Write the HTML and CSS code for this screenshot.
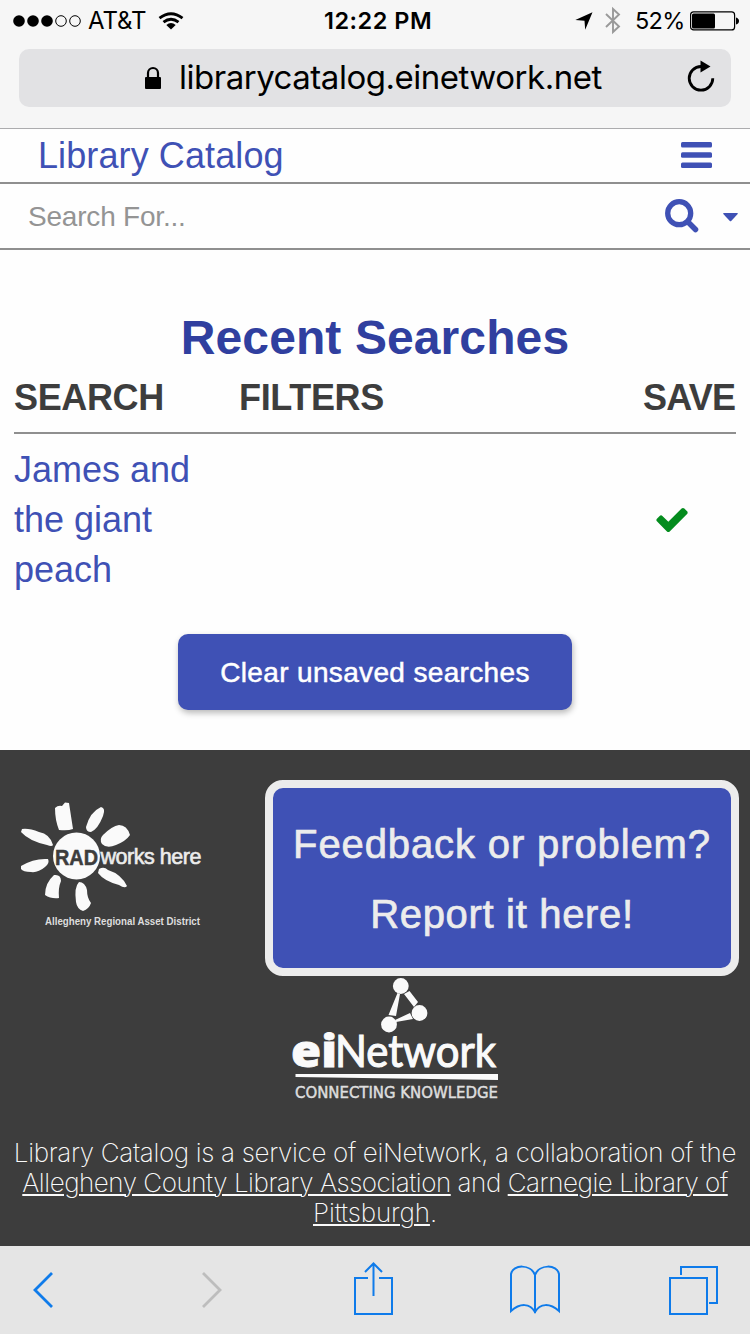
FILE: index.html
```html
<!DOCTYPE html>
<html lang="en">
<head>
<meta charset="utf-8">
<title>Library Catalog</title>
<link rel="stylesheet" href="styles.css">
</head>
<body>
<header class="browser-bar">
  <div class="status">
    <svg class="signal" width="69" height="14" viewBox="0 0 69 14"><g fill="#000"><circle cx="6" cy="7" r="5.8"/><circle cx="20" cy="7" r="5.8"/><circle cx="34" cy="7" r="5.8"/></g><g fill="none" stroke="#000"><circle cx="48" cy="7" r="5.3"/><circle cx="62" cy="7" r="5.3"/></g></svg>
    <span class="carrier">AT&amp;T</span>
    <svg class="wifi" width="26" height="18" viewBox="0 0 26 18"><g fill="none" stroke="#000" stroke-width="2.9"><path d="M1.5 6.2Q13 -2.6 24.500 6.2"/><path d="M5.500 10.200Q13 4.200 20.500 10.200"/></g><path d="M8.300 13Q13 9.200 17.700 13L13 17.500Z"/></svg>
    <span class="clock">12:22 PM</span>
    <svg class="locate" width="18" height="18" viewBox="0 0 18 18"><path d="M17.500 .3 10.200 17.700 9.500 8.800.3 8Z"/></svg>
    <svg class="bluetooth" width="16" height="27" viewBox="0 0 16 27"><path d="M1 7 14 19.500 8 25V2L14 7.500 1 20" fill="none" stroke="#999" stroke-width="1.9"/></svg>
    <span class="percent">52%</span>
    <svg class="battery" width="49" height="20" viewBox="0 0 49 20"><rect x=".6" y=".9" width="44" height="18" rx="3" fill="none" stroke="#000" stroke-width="1.2"/><rect x="2" y="2.500" width="23" height="15" rx="1.500"/><path d="M46 6.500Q49 7.500 49 10T46 13.500Z"/></svg>
  </div>
  <div class="address">
    <svg class="lock" width="18" height="24" viewBox="0 0 18 24"><path d="M4 12V7a5 5 0 0 1 10 0v5" fill="none" stroke="#000" stroke-width="2.200"/><rect x="1" y="11" width="16" height="12" rx="1"/></svg>
    <span class="host">librarycatalog.einetwork.net</span>
    <svg class="reload" width="28" height="32" viewBox="0 0 28 32"><path d="M14 6.500A11.800 11.800 0 1 0 25.800 18.300" fill="none" stroke="#000" stroke-width="2.800"/><path d="M13.500 .5 23.500 6.500 13.500 12.500Z"/></svg>
  </div>
</header>

<nav class="site-bar">
  <a class="brand">Library Catalog</a>
  <svg class="menu" width="31" height="26" viewBox="0 0 31 26" fill="#3f51b5"><rect width="31" height="5.400" rx="1.500"/><rect y="10.300" width="31" height="5.400" rx="1.500"/><rect y="20.600" width="31" height="5.400" rx="1.500"/></svg>
</nav>
<div class="search-bar">
  <span class="placeholder">Search For...</span>
  <svg class="magnifier" width="34" height="34" viewBox="0 0 34 34" fill="none" stroke="#3f51b5"><circle cx="14.200" cy="14.200" r="11.500" stroke-width="5.300"/><path d="M23 23 30.500 30.500" stroke-width="5.500" stroke-linecap="round"/></svg>
  <svg class="caret" width="15" height="9" viewBox="0 0 15 9" fill="#3f51b5"><path d="M.7 0H14.300Q15.200.3 14.700 1L8.200 8Q7.500 8.700 6.800 8L.3 1Q-.2.3.7 0Z"/></svg>
</div>

<main class="content">
  <h1>Recent Searches</h1>
  <div class="grid head"><span class="c-search">SEARCH</span><span class="c-filters">FILTERS</span><span class="c-save">SAVE</span></div>
  <div class="grid row">
    <a class="query">James and the giant peach</a>
    <span></span>
    <svg class="check" width="32" height="24" viewBox="121 334 1550 1188"><path fill="#048c1e" d="M1671 566q0 40-28 68l-724 724-136 136q-28 28-68 28t-68-28l-136-136-362-362q-28-28-28-68t28-68l136-136q28-28 68-28t68 28l294 295 656-657q28-28 68-28t68 28l136 136q28 28 28 68z"/></svg>
  </div>
  <button class="clear">Clear unsaved searches</button>
</main>

<footer class="footer">
  <div class="partners">
    <svg class="rad" width="210" height="140" viewBox="18 800 210 140" fill="#fafafa">
      <path d="M55 808Q58 805 62 806L65 802.500 69 803 73 829Q68 831 59 830Q55 820 55 808Z"/>
      <path d="M101 807Q106 808 103 816Q98 829 91 832Q86 832 86 827Q90 812 101 807Z"/>
      <path d="M119 825Q127 825 130 835Q126 841 116 845Q107 849 102 844Q99 839 103 835Q112 826 119 825Z"/>
      <path d="M22 829Q29 828 39 832Q50 834 53 845Q52 847 47 845Q29 841 21 832Z"/>
      <path d="M21 866Q34 858 48 859Q50 863 45 867Q38 873 31 872Q23 872 21 869Z"/>
      <path d="M54 875Q61 874 61 881Q58 888 59 898Q51 899 45 895Q45 883 54 875Z"/>
      <path d="M79 882Q85 882 87 890Q87 898 91 903Q89 909 83 911Q77 909 76 902Q74 887 79 882Z"/>
      <path d="M99 869Q104 866 108 870Q121 874 127 886Q125 889 119 885Q104 881 98 873Z"/>
      <ellipse cx="76.500" cy="856" rx="23.500" ry="23.500"/>
      <text class="rad-name" x="55" y="864.500" textLength="43" lengthAdjust="spacingAndGlyphs">RAD</text>
      <text class="rad-words" x="100.500" y="864" textLength="101" lengthAdjust="spacing">works here</text>
      <text class="rad-sub" x="45" y="925" textLength="155" lengthAdjust="spacingAndGlyphs">Allegheny Regional Asset District</text>
    </svg>
    <a class="feedback">Feedback or problem?<span>Report it here!</span></a>
  </div>
  <svg class="ein" width="230" height="134" viewBox="280 977 230 134" fill="#fafafa">
    <circle cx="400.800" cy="986" r="7.900"/><circle cx="419.500" cy="1013" r="7.900"/><circle cx="389" cy="1024.500" r="7.900"/>
    <path d="M397.500 993 388.500 1015 396 1016 400 994ZM404 994 414 1007 418 1002 409.500 991ZM396 1022 413 1019 410 1013 395 1020Z"/>
    <text class="ein-bold" x="291" y="1067" textLength="46" lengthAdjust="spacingAndGlyphs">ei</text>
    <text class="ein-name" x="335" y="1067" textLength="161" lengthAdjust="spacingAndGlyphs">Network</text>
    <path d="M295.500 1074H498V1080L295.500 1077Z"/>
    <text class="ein-sub" x="295" y="1098" textLength="203" lengthAdjust="spacingAndGlyphs">CONNECTING KNOWLEDGE</text>
  </svg>
  <p class="credit"><span class="l1">Library Catalog is a service of eiNetwork, a collaboration of the</span><span class="l2"><a>Allegheny County Library Association</a> and <a>Carnegie Library of</a></span><span class="l3"><a>Pittsburgh</a>.</span></p>
</footer>

<nav class="toolbar">
  <svg width="22" height="38" viewBox="0 0 22 38"><path d="M20 2 3 19 20 36" fill="none" stroke="#0f7bea" stroke-width="2.800"/></svg>
  <svg width="22" height="38" viewBox="0 0 22 38"><path d="M2 2 19 19 2 36" fill="none" stroke="#bdbdbd" stroke-width="2.800"/></svg>
  <svg class="share" width="40" height="54" viewBox="0 0 40 54"><path d="M14 16H1V52H38V16H25M19.500 34V2M11 10 19.500 1.500 28 10" fill="none" stroke="#0f7bea" stroke-width="2"/></svg>
  <svg width="52" height="50" viewBox="0 0 52 50"><path d="M26 10C22-1 4-1 2 9V46C11 38 21 38 26 47C31 38 41 38 50 46V9C48-1 30-1 26 10V48" fill="none" stroke="#0f7bea" stroke-width="2"/></svg>
  <svg width="50" height="50" viewBox="0 0 50 50"><path d="M1 13H38V49H1ZM12 10V2H48V38H40" fill="none" stroke="#0f7bea" stroke-width="2"/></svg>
</nav>
</body>
</html>
```

FILE: styles.css
```css
* { box-sizing: border-box; }
body { margin: 0; width: 750px; height: 1334px; overflow: hidden; display: flex; flex-direction: column; background: #fefefe; font-family: "Liberation Sans", Arial, sans-serif; color: #3d3d3d; }
svg { display: block; flex: none; overflow: visible; }
h1, p { margin: 0; }

.browser-bar { height: 129px; flex: none; background: #f6f6f6; border-bottom: 1px solid #acacae; font-family: Inter, sans-serif; color: #000; }
.status { height: 41px; display: flex; align-items: center; padding-left: 13px; font-size: 24px; white-space: nowrap; }
.carrier { width: 58px; margin-left: 6px; letter-spacing: -.1px; }
.wifi { margin-left: 12px; }
.clock { width: 112px; margin-left: 140px; font-size: 23.5px; font-weight: 600; letter-spacing: .5px; }
.locate { margin-left: 139px; }
.bluetooth { margin-left: 12px; }
.percent { width: 48px; margin-left: 14px; font-size: 23.5px; letter-spacing: -.7px; }
.battery { margin-left: 7px; }
.address { height: 58px; margin: 8px 19px 0; padding: 0 16px 0 125px; display: flex; align-items: center; border-radius: 10px; background: #e2e2e4; }
.host { margin-left: 17px; font-size: 33px; line-height: 40px; margin-top: -2px; letter-spacing: -.48px; }
.reload { margin-left: auto; margin-top: -4px; }

.site-bar { height: 55px; flex: none; display: flex; align-items: center; justify-content: space-between; padding: 0 38px; border-bottom: 2px solid #8f8f8f; }
.brand { color: #3f51b5; font-size: 36px; letter-spacing: .1px; }
.menu { margin-top: -2px; }
.search-bar { height: 66px; flex: none; display: flex; align-items: center; padding: 0 12px 0 28px; border-bottom: 2px solid #8f8f8f; }
.placeholder { margin-top: 2px; font-size: 28px; letter-spacing: -.2px; color: #949494; }
.magnifier { margin-left: auto; }
.caret { margin-left: 24px; margin-top: 3px; }

.content { height: 500px; flex: none; padding: 60px 14px 0; display: flex; flex-direction: column; }
h1 { text-align: center; color: #303f9f; font-size: 48px; line-height: 56px; letter-spacing: .1px; }
.grid { display: grid; grid-template-columns: 225px 1fr 93px; }
.head { height: 68px; padding-top: 11px; border-bottom: 2px solid #8f8f8f; font-size: 36px; line-height: 42px; font-weight: 700; letter-spacing: -.35px; }
.c-save { letter-spacing: -.8px; }
.row { height: 150px; margin-top: 11px; align-items: center; }
.query { width: 200px; color: #3f51b5; font-size: 36px; line-height: 50px; }
.check { margin-left: 13px; }
.clear { width: 394px; height: 76px; margin: 39px auto 0; padding-top: 3px; border: 0; border-radius: 10px; background: #3f51b5; color: #fff; font: 28px "Liberation Sans", Arial, sans-serif; letter-spacing: .35px; -webkit-text-stroke: .5px #fff; box-shadow: 1px 3px 6px rgba(0,0,0,.28); }

.footer { height: 496px; flex: none; background: #3d3d3d; padding-top: 30px; color: #fafafa; }
.partners { display: flex; justify-content: space-between; padding: 0 11px 0 18px; }
.rad { margin-top: 20px; }
.rad-name { font: 700 22px "Liberation Sans", sans-serif; fill: #3d3d3d; stroke: #3d3d3d; stroke-width: .5px; }
.rad-words { font: 400 21.5px "Liberation Sans", sans-serif; fill: #ececec; stroke: #ececec; stroke-width: .6px; }
.rad-sub { font: 700 10px "Liberation Sans", sans-serif; fill: #dedede; }
.feedback { width: 474px; height: 196px; padding-top: 21px; display: flex; flex-direction: column; align-items: center; border: 8px solid #ececec; border-radius: 18px; background: #3f51b5; color: #ececec; font-size: 40px; line-height: 70px; letter-spacing: .88px; -webkit-text-stroke: .7px #ececec; }
.feedback span { letter-spacing: .68px; }
.ein { margin: 1px 0 0 280px; }
.ein-bold { font: 800 44px "Open Sans", sans-serif; stroke: #fafafa; stroke-width: .8px; }
.ein-name { font: 400 44px Lato, sans-serif; stroke: #fafafa; stroke-width: 1.1px; }
.ein-sub { font: 400 16px "DejaVu Sans", sans-serif; fill: #dedede; stroke: #dedede; stroke-width: .5px; }
.credit { margin-top: 27px; font: 200 26px/30px Inter, sans-serif; }
.credit span { display: block; text-align: center; white-space: nowrap; }
.l1 { letter-spacing: -.34px; }
.l2 { letter-spacing: -.46px; }
.l3 { letter-spacing: -.1px; }
.credit a { text-decoration: underline; text-decoration-thickness: 2px; text-underline-offset: 2px; }

.toolbar { height: 88px; flex: none; display: grid; grid-template-columns: 169px 153px 155px 160px 50px; align-items: center; padding-left: 32px; background: #e5e5e5; }
.share { margin-top: -2px; }
```
